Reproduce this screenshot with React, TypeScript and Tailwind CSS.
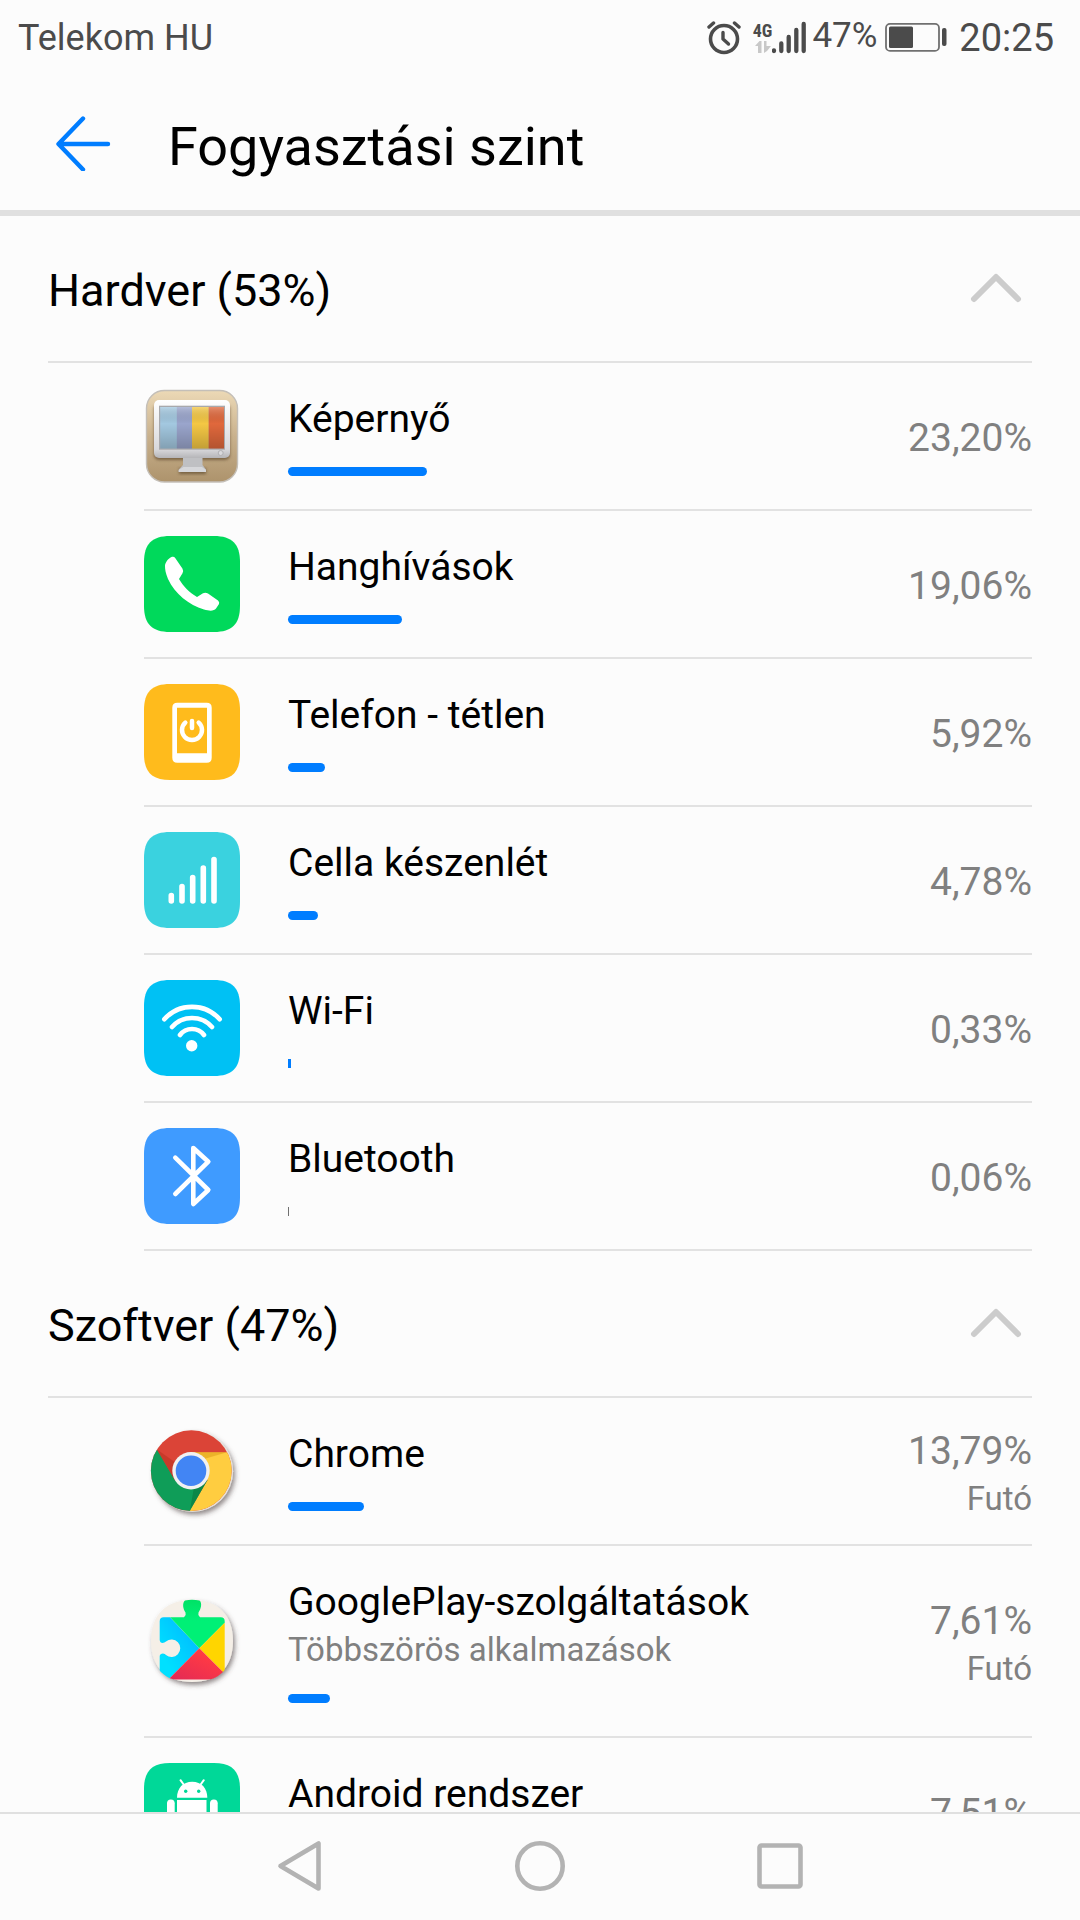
import { useState } from 'react';
import type { ReactNode } from 'react';

const SQUIRCLE = 'M0 26C0 8 8 0 26 0H70C88 0 96 8 96 26V70C96 88 88 96 70 96H26C8 96 0 88 0 70Z';

function Tile({ color, children }: { color: string; children: ReactNode }) {
  return (
    <svg viewBox="0 0 96 96" className="size-24 shrink-0" aria-hidden="true">
      <path d={SQUIRCLE} fill={color} />
      {children}
    </svg>
  );
}

function ScreenIcon() {
  return (
    <svg viewBox="0 0 96 96" className="size-24 shrink-0" aria-hidden="true">
      <defs>
        <linearGradient id="wood" x1="0" y1="0" x2="0" y2="1">
          <stop offset="0" stopColor="#ecd9b6" />
          <stop offset="0.5" stopColor="#c9b18d" />
          <stop offset="1" stopColor="#ad936c" />
        </linearGradient>
        <linearGradient id="frame" x1="0" y1="0" x2="0" y2="1">
          <stop offset="0" stopColor="#ffffff" />
          <stop offset="0.85" stopColor="#d8d8db" />
          <stop offset="1" stopColor="#b5b5b8" />
        </linearGradient>
        <linearGradient id="shade" x1="0" y1="0" x2="0" y2="1">
          <stop offset="0" stopColor="#fff" stopOpacity="0.25" />
          <stop offset="0.4" stopColor="#000" stopOpacity="0" />
          <stop offset="1" stopColor="#000" stopOpacity="0.2" />
        </linearGradient>
        <filter id="soft" x="-20%" y="-20%" width="140%" height="150%">
          <feGaussianBlur stdDeviation="1.4" />
        </filter>
      </defs>
      <rect x="2.5" y="2.5" width="91" height="91.5" rx="18" fill="url(#wood)" stroke="#c4bfb8" strokeWidth="1.4" />
      <rect x="10" y="16" width="76" height="56" rx="5" fill="#5e4a2e" opacity="0.7" filter="url(#soft)" />
      <rect x="35" y="80" width="27" height="6" fill="#5e4a2e" opacity="0.7" filter="url(#soft)" />
      <path d="M39 68H58.5V77L62 81.5V84H34.7V81.5L39 77Z" fill="#bfc0c3" />
      <path d="M39.5 79H58L62 82V84H34.7V82Z" fill="#d6d7da" />
      <rect x="10" y="12" width="76" height="58" rx="5" fill="url(#frame)" />
      <rect x="15" y="17.7" width="66" height="44" fill="#a8a9ac" />
      <rect x="16.2" y="19" width="16.8" height="41.5" fill="#a3c8e0" />
      <rect x="32.8" y="19" width="15.5" height="41.5" fill="#9aa5cc" />
      <rect x="48" y="19" width="16.8" height="41.5" fill="#f4c744" />
      <rect x="64.7" y="19" width="15.3" height="41.5" fill="#e0683c" />
      <rect x="16.2" y="19" width="63.8" height="41.5" fill="url(#shade)" />
      <circle cx="76.7" cy="65" r="2.5" fill="#d9d9dc" stroke="#b0b0b3" />
    </svg>
  );
}

function PhoneIcon() {
  return (
    <Tile color="#00d95b">
      <path
        fill="#fff"
        d="M21 30C21 27 24 22.5 28 20.8Q30 20.2 31.2 22L38.4 32.5Q39.8 34.8 38.5 37.3L35 43C39 50 46 57 53 61L59 57.2Q61.5 56 64 57.5L74 64.5Q75.8 66 75 68L72 72.5C70 75 66 75.3 60 73.5C45 69 31 58 24 43C21.5 37 21 33 21 30Z"
      />
    </Tile>
  );
}

function IdleIcon() {
  return (
    <Tile color="#ffbb1c">
      <path
        fill="#fff"
        fillRule="evenodd"
        d="M33.3 18.7H62.7Q67.7 18.7 67.7 23.7V73.7Q67.7 78.7 62.7 78.7H33.3Q28.3 78.7 28.3 73.7V23.7Q28.3 18.7 33.3 18.7ZM33 23.7V69.3H63V23.7Z"
      />
      <path d="M41.3 38.6A10 10 0 1 0 54.7 38.6M48 37V44" fill="none" stroke="#fff" strokeWidth="4.5" strokeLinecap="round" />
    </Tile>
  );
}

function CellIcon() {
  return (
    <Tile color="#3ad2df">
      <path
        d="M27.3 63.5V69M38 54.5V69M48.7 45.5V69M59.3 36V69M70 27.5V69"
        fill="none"
        stroke="#fff"
        strokeWidth="5.6"
        strokeLinecap="round"
      />
    </Tile>
  );
}

function WifiIcon() {
  return (
    <Tile color="#00c1f4">
      <path
        d="M20.3 39.3A37 37 0 0 1 75.7 39.3M28 47A26.7 26.7 0 0 1 68 47M36 55A15 15 0 0 1 60 55"
        fill="none"
        stroke="#fff"
        strokeWidth="4.6"
        strokeLinecap="round"
      />
      <circle cx="47.7" cy="65.7" r="5.7" fill="#fff" />
    </Tile>
  );
}

function BluetoothIcon() {
  return (
    <Tile color="#3f9bff">
      <path
        d="M31.3 29.7L64.3 62L49.3 76V20L64.3 33.7L31.3 66"
        fill="none"
        stroke="#fff"
        strokeWidth="4.6"
        strokeLinecap="round"
        strokeLinejoin="round"
      />
    </Tile>
  );
}

function ChromeIcon() {
  return (
    <svg viewBox="0 0 96 96" className="size-24 shrink-0 overflow-visible" aria-hidden="true">
      <defs>
        <filter id="discDrop" x="-20%" y="-20%" width="150%" height="150%">
          <feDropShadow dx="2" dy="3" stdDeviation="2.4" floodColor="#4a3a3a" floodOpacity="0.6" />
        </filter>
        <clipPath id="disc">
          <circle cx="47.3" cy="47.7" r="40.4" />
        </clipPath>
      </defs>
      <circle cx="48.5" cy="48.2" r="40.6" fill="#e9e2da" filter="url(#discDrop)" />
      <g clipPath="url(#disc)">
        <rect width="96" height="96" fill="#db4437" />
        <path d="M47 29.3H96V96H40L45 88.7L63.5 57Z" fill="#ffcd40" />
        <path d="M12.7 26.3L31 57.5L63.5 57L43.5 92H0V10Z" fill="#0f9d58" />
        <path d="M12.7 26.3L42 47L31 57.5Z" fill="#a52714" opacity="0.35" />
        <path d="M48 29.3H83L60 36Z" fill="#c98300" opacity="0.35" />
        <path d="M63.5 57L46 87L50 64Z" fill="#055524" opacity="0.3" />
      </g>
      <circle cx="47" cy="47.7" r="18.7" fill="#f1f1f1" />
      <circle cx="47" cy="47.7" r="15.3" fill="#4285f4" />
    </svg>
  );
}

function PlayServicesIcon() {
  return (
    <svg viewBox="0 0 96 96" className="size-24 shrink-0 overflow-visible" aria-hidden="true">
      <defs>
        <filter id="pebbleDrop" x="-20%" y="-20%" width="150%" height="150%">
          <feDropShadow dx="2" dy="3" stdDeviation="2.4" floodColor="#4a3a3a" floodOpacity="0.6" />
        </filter>
        <clipPath id="pebble">
          <path d="M0 0H96V48H89C89 76 76 89 48 89C20 89 7 76 7 48H0Z" />
        </clipPath>
        <clipPath id="puzzle">
          <path d="M19.7 24.3H40Q42.5 22 41.5 19.5C39 16 38 10 41 7.5Q48 6 55.5 7.5C58.5 10 57 16 54.5 19.5Q53.5 22 56 24.3H76.7Q80.7 24.3 80.7 28.3V86.5H15.7V63Q16 60.5 19 60.5Q21 60.5 22 62A8.7 8.7 0 1 0 22 48.6Q20.5 50 18.5 50Q16 50 15.7 47V28.3Q15.7 24.3 19.7 24.3Z" />
        </clipPath>
        <linearGradient id="sky" x1="1" y1="0" x2="0" y2="1">
          <stop offset="0" stopColor="#00a8ff" />
          <stop offset="0.7" stopColor="#00e0ff" />
        </linearGradient>
        <linearGradient id="leaf" x1="0" y1="0" x2="0" y2="1">
          <stop offset="0" stopColor="#00dd60" />
          <stop offset="0.5" stopColor="#00f076" />
        </linearGradient>
        <linearGradient id="rose" x1="1" y1="0" x2="0" y2="1">
          <stop offset="0.3" stopColor="#ff3a44" />
          <stop offset="1" stopColor="#d8235c" />
        </linearGradient>
      </defs>
      <path
        d="M48 7C74 7 89 22 89 48C89 74 74 89 48 89C22 89 7 74 7 48C7 22 22 7 48 7Z"
        fill="#f5efe7"
        filter="url(#pebbleDrop)"
      />
      <g clipPath="url(#pebble)">
        <g clipPath="url(#puzzle)">
          <path d="M0 0H26V24.3L55.3 55.3L24 87H0Z" fill="url(#sky)" />
          <path d="M24 22V0H96V14.5L55.3 55.3Z" fill="url(#leaf)" />
          <path d="M96 14.5V96L55.3 55.3Z" fill="#ffd500" />
          <path d="M55.3 55.3L96 96H15Z" fill="url(#rose)" />
        </g>
      </g>
    </svg>
  );
}

function AndroidIcon() {
  return (
    <Tile color="#00d898">
      <path d="M36.5 17.2L40 22M59.8 17.2L56.3 22" stroke="#fff" strokeWidth="2" strokeLinecap="round" />
      <path d="M33 34.7C33 25 39 18.7 48.2 18.7S63.3 25 63.3 34.7Z" fill="#fff" />
      <circle cx="41.7" cy="28.2" r="1.7" fill="#00d898" />
      <circle cx="54.7" cy="28.2" r="1.7" fill="#00d898" />
      <path d="M33 37H62.5V61Q62.5 64 59.5 64H36Q33 64 33 61Z" fill="#fff" />
      <rect x="23" y="36.5" width="7.7" height="22" rx="3.8" fill="#fff" />
      <rect x="66" y="36.5" width="7.7" height="22" rx="3.8" fill="#fff" />
    </Tile>
  );
}

type Item = {
  name: string;
  detail?: string;
  value: string;
  state?: string;
  bar: number;
  icon: ReactNode;
};

const hardware: Item[] = [
  { name: 'Képernyő', value: '23,20%', bar: 139, icon: <ScreenIcon /> },
  { name: 'Hanghívások', value: '19,06%', bar: 114, icon: <PhoneIcon /> },
  { name: 'Telefon - tétlen', value: '5,92%', bar: 37, icon: <IdleIcon /> },
  { name: 'Cella készenlét', value: '4,78%', bar: 30, icon: <CellIcon /> },
  { name: 'Wi-Fi', value: '0,33%', bar: 3, icon: <WifiIcon /> },
  { name: 'Bluetooth', value: '0,06%', bar: 1, icon: <BluetoothIcon /> },
];

const software: Item[] = [
  { name: 'Chrome', value: '13,79%', state: 'Futó', bar: 76, icon: <ChromeIcon /> },
  {
    name: 'GooglePlay-szolgáltatások',
    detail: 'Többszörös alkalmazások',
    value: '7,61%',
    state: 'Futó',
    bar: 42,
    icon: <PlayServicesIcon />,
  },
  { name: 'Android rendszer', value: '7,51%', bar: 42, icon: <AndroidIcon /> },
];

function barStyle(bar: number) {
  if (bar <= 1) return 'bg-[#707070]';
  if (bar <= 3) return 'bg-[#007dff]';
  return 'rounded-full bg-[#007dff]';
}

function UsageRow({ item }: { item: Item }) {
  return (
    <li className="flex items-center gap-12 border-b-2 border-[#e2e2e2]">
      {item.icon}
      <div className="min-w-0 flex-1 pt-8 pb-[33px]">
        <p className="text-[39px] leading-[48px] text-black">{item.name}</p>
        {item.detail && <p className="mt-1 text-[33px] leading-[40px] text-[#808080]">{item.detail}</p>}
        <div className={`mt-6 h-[9px] ${barStyle(item.bar)}`} style={{ width: item.bar }} />
      </div>
      <div className={`text-right text-[#808080] ${item.state ? 'pt-2' : 'pt-1'}`}>
        <p className="text-[39px] leading-[48px]">{item.value}</p>
        {item.state && <p className="text-[33px] leading-[48px]">{item.state}</p>}
      </div>
    </li>
  );
}

function UsageSection({ title, items }: { title: string; items: Item[] }) {
  const [open, setOpen] = useState(true);

  return (
    <section className="px-12">
      <h2 className="border-b-2 border-[#e2e2e2]">
        <button
          type="button"
          onClick={() => setOpen(!open)}
          aria-expanded={open}
          className="flex h-[145px] w-full items-center justify-between text-left"
        >
          <span className="pt-1 text-[45px] leading-[54px] text-black">{title}</span>
          <svg viewBox="0 0 72 36" className={`h-9 w-[72px] ${open ? '' : 'rotate-180'}`} aria-hidden="true">
            <path d="M14 28L36 6L58 28" fill="none" stroke="#ccc" strokeWidth="6" strokeLinecap="round" strokeLinejoin="round" />
          </svg>
        </button>
      </h2>
      {open && (
        <ul className="ml-24">
          {items.map((item) => (
            <UsageRow key={item.name} item={item} />
          ))}
        </ul>
      )}
    </section>
  );
}

function StatusBar() {
  return (
    <div className="flex h-[76px] shrink-0 items-center justify-between pr-[26px] pl-[18px] text-[#4b4b4b]">
      <span className="text-[36px] leading-[48px]">Telekom HU</span>
      <div className="flex items-center">
        <svg viewBox="0 0 34 36" className="mr-3 h-9 w-[34px]" fill="none" stroke="currentColor" strokeLinecap="round" aria-label="Ébresztő">
          <circle cx="17" cy="19" r="13.5" strokeWidth="3.6" />
          <path d="M16 12.500V19L21.500 24" strokeWidth="3.4" strokeLinejoin="round" />
          <path d="M2 7L6.5 3M32 7L27.5 3" strokeWidth="3.4" />
        </svg>
        <div className="flex flex-col items-center">
          <span className="font-['Liberation_Sans_Narrow','Roboto_Condensed',Roboto,sans-serif] text-[18px] leading-[18px] font-bold">4G</span>
          <svg viewBox="0 0 18 14" className="h-[14px] w-[18px]" fill="#c8c8c8" aria-hidden="true">
            <path d="M1 6L5.5 1H7.500V13H4V6ZM10 1H12.500V6H17L13 11L10 13Z" />
          </svg>
        </div>
        <svg viewBox="0 0 36 36" className="h-9 w-9" fill="none" stroke="currentColor" strokeWidth="4.3" strokeLinecap="round" aria-label="Térerő">
          <path d="M2 30.5V31M9.3 23.5V31M16.7 17V31M24.300 10V31M31.700 4V31" />
        </svg>
        <span className="ml-1 pb-1 text-[35px] leading-[40px]">47%</span>
        <svg viewBox="0 0 62 30" className="mr-3 ml-2 h-[30px] w-[62px]" aria-label="Akkumulátor">
          <rect x="1" y="0.900" width="53" height="27" rx="4" fill="none" stroke="#707070" strokeWidth="1.8" />
          <rect x="4" y="3.500" width="24" height="21.500" rx="1.5" fill="currentColor" />
          <rect x="57" y="5" width="4.500" height="18" rx="2" fill="currentColor" />
        </svg>
        <span className="text-[38px] leading-[48px]">20:25</span>
      </div>
    </div>
  );
}

export default function App() {
  return (
    <div className="flex h-screen flex-col overflow-hidden bg-[#fcfcfc] font-[Roboto,'Noto_Sans',sans-serif]">
      <StatusBar />

      <header className="flex h-[140px] shrink-0 items-center border-b-6 border-[#e0e0e0] pl-[56px]">
        <button type="button" aria-label="Vissza" className="mr-[57px]">
          <svg viewBox="0 0 55 56" className="h-14 w-[55px]" fill="none" stroke="#007dff" strokeWidth="4.4" strokeLinecap="round" strokeLinejoin="round">
            <path d="M27 3.500L2.500 29L27 54.500M3 29H52" />
          </svg>
        </button>
        <h1 className="pt-2 text-[54px] leading-[64px] text-black">Fogyasztási szint</h1>
      </header>

      <main className="min-h-0 flex-1 overflow-hidden">
        <UsageSection title="Hardver (53%)" items={hardware} />
        <UsageSection title="Szoftver (47%)" items={software} />
      </main>

      <nav className="flex shrink-0 justify-center border-t-2 border-[#e0e0e0] py-[25px]">
        <button type="button" aria-label="Vissza" className="flex w-60 justify-center">
          <svg viewBox="0 0 56 56" className="size-14" fill="none" stroke="#b3b3b3" strokeWidth="4.6" strokeLinejoin="round">
            <path d="M8.5 27L46.5 4.5V49.5Z" />
          </svg>
        </button>
        <button type="button" aria-label="Kezdőlap" className="flex w-60 justify-center">
          <svg viewBox="0 0 56 56" className="size-14" fill="none" stroke="#b3b3b3" strokeWidth="4.6">
            <circle cx="28" cy="27" r="22.7" />
          </svg>
        </button>
        <button type="button" aria-label="Legutóbbiak" className="flex w-60 justify-center">
          <svg viewBox="0 0 56 56" className="size-14" fill="none" stroke="#b3b3b3" strokeWidth="4.6">
            <rect x="7.5" y="6.5" width="41" height="41" rx="2" />
          </svg>
        </button>
      </nav>
    </div>
  );
}
